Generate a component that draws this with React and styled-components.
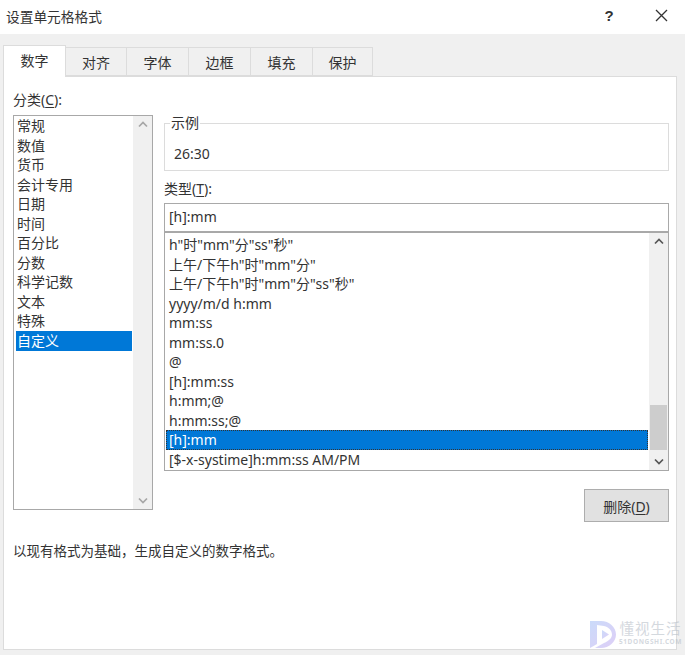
import React from 'react';
import styled, {createGlobalStyle} from 'styled-components';

const GlobalStyle = createGlobalStyle`
  html, body {
    margin: 0;
    padding: 0;
    background: #fff;
  }
  body {
    font-family: "Noto Sans", "Noto Sans CJK SC", sans-serif;
    font-size: 14px;
    color: #333;
  }
`;

const Dialog = styled.div`
  position: relative;
  width: 685px;
  height: 655px;
  overflow: hidden;
  background: #f0f0f0;
`;

const TitleBar = styled.div`
  display: flex;
  align-items: center;
  box-sizing: border-box;
  height: 34px;
  background: #fff;
  padding: 0 17px 3px 6px;
`;

const Title = styled.div`
  flex-grow: 1;
  font-size: 13.7px;
  color: #333;
`;

const TitleButton = styled.button`
  display: flex;
  align-items: center;
  justify-content: center;
  width: 14px;
  height: 16px;
  margin-left: ${p => p.$gap}px;
  padding: 0;
  border: 0;
  background: none;
  font: bold 15px "Liberation Sans", sans-serif;
  color: #333;
`;

const TabStrip = styled.div`
  display: flex;
  align-items: flex-end;
  height: 42px;
  padding-left: 3px;
`;

const Tab = styled.div`
  display: flex;
  align-items: center;
  justify-content: center;
  box-sizing: border-box;
  width: ${p => p.$width}px;
  height: ${p => (p.$active ? 32 : 29)}px;
  margin-bottom: ${p => (p.$active ? -1 : 0)}px;
  border: 1px solid #dcdcdc;
  border-left-width: ${p => (p.$active ? 1 : 0)}px;
  border-bottom-width: ${p => (p.$active ? 0 : 1)}px;
  background: ${p => (p.$active ? '#fff' : '#f0f0f0')};
  font-size: 14px;
  color: #333;
  position: relative;
  padding-bottom: ${p => (p.$active ? 3 : 0)}px;
`;

const Panel = styled.div`
  display: grid;
  grid-template-columns: 140px 505px;
  column-gap: 11px;
  box-sizing: border-box;
  width: 674px;
  height: 574px;
  margin-left: 3px;
  padding: 8px 9px 0 9px;
  background: #fff;
  border: 1px solid #dcdcdc;
  align-content: start;
`;

const LeftColumn = styled.div`
  display: flex;
  flex-direction: column;
  padding-top: 4px;
`;

const RightColumn = styled.div`
  display: flex;
  flex-direction: column;
  padding-top: 38px;
  position: relative;
`;

const Label = styled.div`
  height: 26px;
  line-height: 21px;
  font-size: 14px;
  color: #333;
  u { text-underline-offset: 2px; }
`;

const ListBox = styled.div`
  display: flex;
  box-sizing: border-box;
  height: ${p => p.$height}px;
  border: 1px solid #a8a8a8;
  background: #fff;
`;

const Items = styled.div`
  flex-grow: 1;
  min-width: 0;
  padding: ${p => p.$pad}px 1px 0 ${p => p.$left}px;
`;

const Item = styled.div`
  height: 19.56px;
  line-height: 19.56px;
  padding-left: ${p => p.$indent}px;
  font-size: 14px;
  white-space: nowrap;
  color: ${p => (p.$selected ? '#fff' : '#333')};
  background: ${p => (p.$selected ? '#0078d7' : 'transparent')};
  outline: ${p => (p.$focus ? '1px dotted #333' : 'none')};
  outline-offset: -1px;
`;

const ScrollBar = styled.div`
  display: flex;
  flex-direction: column;
  flex-shrink: 0;
  width: 19px;
  background: #f0f0f0;
`;

const ScrollArrow = styled.div`
  display: flex;
  align-items: center;
  justify-content: center;
  height: 17px;
  flex-shrink: 0;
`;

const ScrollTrack = styled.div`
  flex-grow: 1;
  display: flex;
  flex-direction: column;
  justify-content: flex-end;
`;

const ScrollThumb = styled.div`
  height: 45px;
  margin: 0 1px 3px;
  background: #cdcdcd;
`;

const SampleBox = styled.fieldset`
  box-sizing: border-box;
  height: 48px;
  margin: 0;
  padding: 0 9px;
  border: 1px solid #dcdcdc;
  position: relative;
`;

const SampleLegend = styled.div`
  position: absolute;
  top: -10px;
  left: 5px;
  padding: 0 1px;
  background: #fff;
  font-size: 14px;
  line-height: 18px;
  color: #333;
`;

const SampleValue = styled.div`
  line-height: 18px;
  padding-top: 21px;
  font-size: 14px;
  color: #333;
`;

const TypeLabel = styled(Label)`
  margin-top: 7px;
  height: 25px;
  line-height: 22px;
`;

const FormatInput = styled.div`
  box-sizing: border-box;
  height: 29px;
  line-height: 26px;
  padding-left: 4px;
  border: 1px solid #a9a9a9;
  font-size: 14px;
  color: #333;
`;

const ButtonRow = styled.div`
  display: flex;
  justify-content: flex-end;
  margin-top: 18px;
`;

const DeleteButton = styled.button`
  width: 85px;
  height: 33px;
  padding: 0;
  border: 1px solid #adadad;
  background: #e1e1e1;
  font-family: inherit;
  font-size: 14px;
  color: #333;
  u { text-underline-offset: 2px; }
`;

const Description = styled.div`
  grid-column: 1 / 3;
  margin-top: 20px;
  font-size: 13.5px;
  line-height: 18px;
  color: #333;
`;

const Watermark = styled.div`
  position: absolute;
  right: 3px;
  bottom: 7px;
  display: flex;
  align-items: center;
  gap: 3px;
  opacity: 0.6;
`;

const WatermarkText = styled.div`
  display: flex;
  flex-direction: column;
  align-items: center;
  gap: 2px;
  padding-bottom: 3px;
  color: #b9c0c9;
`;

const WatermarkTitle = styled.div`
  font-size: 14.5px;
  line-height: 15px;
  letter-spacing: 1px;
`;

const WatermarkUrl = styled.div`
  font-size: 6.5px;
  line-height: 7px;
  letter-spacing: 0.6px;
  font-weight: 700;
`;

const Arrow = ({up, color = '#a6a6a6'}) => (
  <svg width="10" height="7" viewBox="0 0 10 7">
    <path d={up ? 'M1 5.5 5 1.5 9 5.5' : 'M1 1.5 5 5.5 9 1.5'} fill="none" stroke={color} strokeWidth="1.7" />
  </svg>
);

const categories = ['常规', '数值', '货币', '会计专用', '日期', '时间', '百分比', '分数', '科学记数', '文本', '特殊', '自定义'];

const formats = [
  'h"时"mm"分"ss"秒"',
  '上午/下午h"时"mm"分"',
  '上午/下午h"时"mm"分"ss"秒"',
  'yyyy/m/d h:mm',
  'mm:ss',
  'mm:ss.0',
  '@',
  '[h]:mm:ss',
  'h:mm;@',
  'h:mm:ss;@',
  '[h]:mm',
  '[$-x-systime]h:mm:ss AM/PM',
];

const tabs = [
  {name: '数字', width: 63},
  {name: '对齐', width: 61},
  {name: '字体', width: 62},
  {name: '边框', width: 62},
  {name: '填充', width: 62},
  {name: '保护', width: 60},
];

export default function App() {
  return (
    <Dialog>
      <GlobalStyle />
      <TitleBar>
        <Title>设置单元格格式</Title>
        <TitleButton>?</TitleButton>
        <TitleButton $gap={38}>
          <svg width="13" height="13" viewBox="0 0 13 13">
            <path d="M1 1 12 12M12 1 1 12" stroke="#333" strokeWidth="1.3" fill="none" />
          </svg>
        </TitleButton>
      </TitleBar>
      <TabStrip>
        {tabs.map((t, i) => (
          <Tab key={t.name} $active={i === 0} $width={t.width}>{t.name}</Tab>
        ))}
      </TabStrip>
      <Panel>
        <LeftColumn>
          <Label>分类(<u>C</u>):</Label>
          <ListBox $height={395}>
            <Items $pad={0} $left={2}>
              {categories.map((c, i) => (
                <Item key={c} $indent={1} $selected={i === 11}>{c}</Item>
              ))}
            </Items>
            <ScrollBar>
              <ScrollArrow><Arrow up /></ScrollArrow>
              <ScrollTrack />
              <ScrollArrow><Arrow /></ScrollArrow>
            </ScrollBar>
          </ListBox>
        </LeftColumn>
        <RightColumn>
          <SampleBox>
            <SampleLegend>示例</SampleLegend>
            <SampleValue>26:30</SampleValue>
          </SampleBox>
          <TypeLabel>类型(<u>T</u>):</TypeLabel>
          <FormatInput>[h]:mm</FormatInput>
          <ListBox $height={239}>
            <Items $pad={2} $left={1}>
              {formats.map((f, i) => (
                <Item key={f} $indent={3} $selected={i === 10} $focus={i === 10}>{f}</Item>
              ))}
            </Items>
            <ScrollBar>
              <ScrollArrow><Arrow up color="#555" /></ScrollArrow>
              <ScrollTrack><ScrollThumb /></ScrollTrack>
              <ScrollArrow><Arrow color="#555" /></ScrollArrow>
            </ScrollBar>
          </ListBox>
          <ButtonRow>
            <DeleteButton>删除(<u>D</u>)</DeleteButton>
          </ButtonRow>
        </RightColumn>
        <Description>以现有格式为基础，生成自定义的数字格式。</Description>
      </Panel>
      <Watermark>
        <svg width="26" height="27" viewBox="0 0 26 27">
          <defs>
            <linearGradient id="wm" x1="0" y1="0" x2="1" y2="1">
              <stop offset="0" stopColor="#a9c4f7" />
              <stop offset="1" stopColor="#c9aff2" />
            </linearGradient>
          </defs>
          <path d="M0 0H11C19 0 26 6 26 13.5S19 27 11 27H5L14 22C19 20 22 17 22 13.5S19 6 14 5L7 4V23L0 27Z" fill="url(#wm)" />
          <path d="M12 9 19 13.5 12 18Z" fill="url(#wm)" />
        </svg>
        <WatermarkText>
          <WatermarkTitle>懂视生活</WatermarkTitle>
          <WatermarkUrl>51DONGSHI.COM</WatermarkUrl>
        </WatermarkText>
      </Watermark>
    </Dialog>
  );
}
